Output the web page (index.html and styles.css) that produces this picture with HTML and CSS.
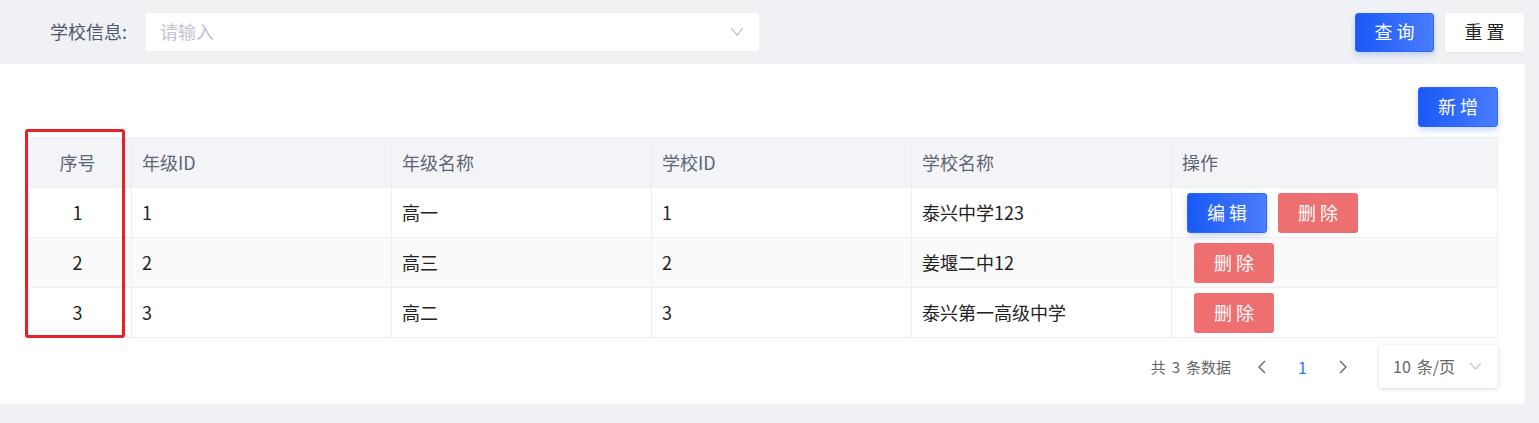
FILE: index.html
```html
<!DOCTYPE html>
<html lang="zh-CN">
  <head>
    <meta charset="UTF-8" />
    <meta name="viewport" content="width=device-width, initial-scale=1.0" />
    <title>年级管理</title>
    <link rel="stylesheet" href="styles.css">
  </head>
  <body>
    <div class="search-bar">
      <label class="search-label">学校信息:</label>
      <div class="select-box">
        <span class="placeholder">请输入</span>
        <svg class="chevron" width="14" height="9" viewBox="0 0 14 9">
          <path d="M1 1 L7 8 L13 1" fill="none" stroke="#c0c4cc" stroke-width="1.2" />
        </svg>
      </div>
      <div class="search-actions">
        <button class="btn btn-primary btn-lg">查询</button>
        <button class="btn btn-default btn-lg">重置</button>
      </div>
    </div>

    <div class="card">
      <div class="toolbar">
        <button class="btn btn-primary btn-md">新增</button>
      </div>

      <table class="data-table">
        <colgroup>
          <col style="width: 103px" />
          <col style="width: 260px" />
          <col style="width: 260px" />
          <col style="width: 260px" />
          <col style="width: 260px" />
          <col />
        </colgroup>
        <thead>
          <tr>
            <th class="center">序号</th>
            <th>年级ID</th>
            <th>年级名称</th>
            <th>学校ID</th>
            <th>学校名称</th>
            <th>操作</th>
          </tr>
        </thead>
        <tbody>
          <tr>
            <td class="center">1</td>
            <td>1</td>
            <td>高一</td>
            <td>1</td>
            <td>泰兴中学123</td>
            <td class="actions">
              <button class="btn btn-primary btn-sm">编辑</button>
              <button class="btn btn-danger btn-sm">删除</button>
            </td>
          </tr>
          <tr class="striped">
            <td class="center">2</td>
            <td>2</td>
            <td>高三</td>
            <td>2</td>
            <td>姜堰二中12</td>
            <td class="actions only-delete">
              <button class="btn btn-danger btn-sm">删除</button>
            </td>
          </tr>
          <tr>
            <td class="center">3</td>
            <td>3</td>
            <td>高二</td>
            <td>3</td>
            <td>泰兴第一高级中学</td>
            <td class="actions only-delete">
              <button class="btn btn-danger btn-sm">删除</button>
            </td>
          </tr>
        </tbody>
      </table>

      <div class="highlight-box"></div>

      <div class="pagination">
        <span class="total">共<span class="total-num">3</span>条数据</span>
        <svg class="pager-arrow" width="10" height="16" viewBox="0 0 10 16">
          <path d="M8 2 L2 8 L8 14" fill="none" stroke="#666" stroke-width="1.4" />
        </svg>
        <span class="page current">1</span>
        <svg class="pager-arrow" width="10" height="16" viewBox="0 0 10 16">
          <path d="M2 2 L8 8 L2 14" fill="none" stroke="#666" stroke-width="1.4" />
        </svg>
        <div class="page-size">
          <span>10<span class="gap"></span>条/页</span>
          <svg width="13" height="8" viewBox="0 0 13 8">
            <path d="M1 1 L6.5 7 L12 1" fill="none" stroke="#c8c8c8" stroke-width="1.2" />
          </svg>
        </div>
      </div>
    </div>
  </body>
</html>
```

FILE: styles.css
```css
body {
  margin: 0;
  font-family: "Noto Sans CJK SC", "Liberation Sans", sans-serif;
  background-color: #f0f1f5;
  color: #222;
  height: 423px;
  overflow: hidden;
}
.search-bar {
  display: flex;
  align-items: center;
  height: 64px;
  padding: 0 15px 0 50px;
  width: 1474px;
}
.search-label {
  width: 96px;
  font-size: 18px;
  color: #4f5866;
  padding-bottom: 2px;
}
.select-box {
  width: 613px;
  height: 38px;
  background-color: white;
  border-radius: 2px;
  display: flex;
  align-items: center;
  justify-content: space-between;
  padding: 0 15px 2px 14px;
  box-sizing: border-box;
}
.placeholder {
  font-size: 18px;
  color: #c0c4cc;
}
.search-actions {
  margin-left: auto;
  display: flex;
  gap: 11px;
}
.btn {
  border: none;
  border-radius: 3px;
  font-family: inherit;
  cursor: pointer;
  color: white;
  padding: 0 0 2px 0;
  letter-spacing: 4px;
  text-indent: 4px;
}
.btn-primary {
  background: linear-gradient(90deg, #1a58f5, #4a7dff);
  border: 1px solid #2d66f2;
  box-shadow: 0 3px 6px rgba(40, 100, 240, 0.25);
}
.btn-default {
  background-color: white;
  color: #222;
  box-shadow: 0 1px 3px rgba(0, 0, 0, 0.06);
}
.btn-danger {
  background-color: #ee6f6f;
}
.btn-lg {
  width: 79px;
  height: 39px;
  font-size: 18px;
}
.btn-md {
  width: 80px;
  height: 40px;
  font-size: 18px;
}
.btn-sm {
  width: 80px;
  height: 40px;
  font-size: 18px;
}
.card {
  position: relative;
  width: 1525px;
  background-color: white;
  padding: 23px 27px 16px 28px;
  box-sizing: border-box;
  border-radius: 0 2px 2px 0;
}
.toolbar {
  display: flex;
  justify-content: flex-end;
  margin-bottom: 10px;
}
.data-table {
  width: 1470px;
  border-collapse: collapse;
  table-layout: fixed;
  font-size: 18px;
}
.data-table th,
.data-table td {
  height: 50px;
  box-sizing: border-box;
  padding: 0 10px 2px 10px;
  border: 1px solid #eceef2;
  text-align: left;
  font-weight: normal;
}
.data-table th {
  background-color: #f3f4f8;
  color: #5d6673;
}
.data-table td {
  color: #222;
}
.data-table .center {
  text-align: center;
  padding: 0 15px 2px 10px;
}
.striped td {
  background-color: #fafafa;
}
.actions {
  padding: 0 0 0 15px !important;
}
.actions .btn + .btn {
  margin-left: 7px;
}
.only-delete {
  padding-left: 22px !important;
}
.highlight-box {
  position: absolute;
  left: 25px;
  top: 65px;
  width: 100px;
  height: 209px;
  border: 3px solid #e5222b;
  border-radius: 3px;
  box-sizing: border-box;
}
.pagination {
  display: flex;
  justify-content: flex-end;
  align-items: center;
  margin-top: 7px;
  font-size: 15px;
  color: #666;
}
.total {
  margin-right: 24px;
}
.total-num {
  margin: 0 6px;
}
.pager-arrow {
  margin: 0 2px;
}
.page {
  margin: 0 29px;
  font-size: 16px;
}
.page.current {
  color: #1a7cf5;
}
.page-size {
  margin-left: 29px;
  width: 119px;
  height: 43px;
  box-sizing: border-box;
  border-radius: 3px;
  box-shadow: 0 1px 4px rgba(0, 0, 0, 0.15);
  display: flex;
  align-items: center;
  justify-content: space-between;
  padding: 0 16px 2px 14px;
  font-size: 16px;
  color: #666;
}
.gap {
  display: inline-block;
  width: 6px;
}
```
